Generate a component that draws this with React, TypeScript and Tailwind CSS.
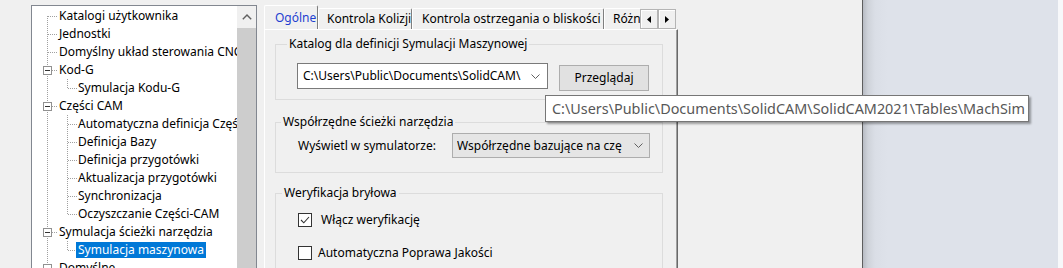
import React from 'react';

type Row = { t: string; l: 0 | 1; box?: boolean; sel?: boolean };

const rows: Row[] = [
  { t: 'Katalogi użytkownika', l: 0 },
  { t: 'Jednostki', l: 0 },
  { t: 'Domyślny układ sterowania CNC', l: 0 },
  { t: 'Kod-G', l: 0, box: true },
  { t: 'Symulacja Kodu-G', l: 1 },
  { t: 'Części CAM', l: 0, box: true },
  { t: 'Automatyczna definicja Części', l: 1 },
  { t: 'Definicja Bazy', l: 1 },
  { t: 'Definicja przygotówki', l: 1 },
  { t: 'Aktualizacja przygotówki', l: 1 },
  { t: 'Synchronizacja', l: 1 },
  { t: 'Oczyszczanie Części-CAM', l: 1 },
  { t: 'Symulacja ścieżki narzędzia', l: 0, box: true },
  { t: 'Symulacja maszynowa', l: 1, sel: true },
  { t: 'Domyślne', l: 0, box: true },
];

const c = (i: number) => 10 + 18 * i;

function TreeLines() {
  const dot = { stroke: '#a0a0a0', strokeDasharray: '1 1', shapeRendering: 'crispEdges' as const };
  const l1Groups: [number, number][] = [
    [3, 4],
    [5, 11],
    [12, 13],
  ];
  return (
    <svg width="205" height="300" className="absolute left-0 top-0 pointer-events-none">
      <line x1="15.5" y1={c(0)} x2="15.5" y2="300" {...dot} />
      {l1Groups.map(([p, e]) => (
        <line key={p} x1="35.5" y1={c(p) + 9} x2="35.5" y2={c(e) + 1} {...dot} />
      ))}
      {rows.map((r, i) =>
        r.l === 0 ? (
          <line key={i} x1={r.box ? 20 : 16} y1={c(i) + 0.5} x2="26" y2={c(i) + 0.5} {...dot} />
        ) : (
          <line key={i} x1="36" y1={c(i) + 0.5} x2="45" y2={c(i) + 0.5} {...dot} />
        )
      )}
      {rows.map((r, i) =>
        r.box ? (
          <g key={'b' + i} shapeRendering="crispEdges">
            <rect x="11.5" y={c(i) - 3.5} width="8" height="8" fill="#fff" stroke="#919191" />
            <line x1="13" y1={c(i) + 0.5} x2="18" y2={c(i) + 0.5} stroke="#333" />
          </g>
        ) : null
      )}
    </svg>
  );
}

function Tree() {
  return (
    <div className="w-[226px] h-[300px] border border-[#828790] bg-white flex shrink-0">
      <div className="relative flex-1 overflow-hidden pt-[1px]">
        <TreeLines />
        {rows.map((r, i) => (
          <div
            key={i}
            className={`relative h-[18px] flex items-center whitespace-nowrap text-[12px] text-black ${
              r.l === 0 ? 'pl-[27px]' : 'pl-[44px]'
            }`}
          >
            <span
              className={`h-[16px] leading-[16px] px-[2px] ${r.sel ? 'bg-[#0078d7] text-white' : ''} ${
                r.l === 0 ? '-ml-[2px]' : ''
              }`}
            >
              {r.t}
            </span>
          </div>
        ))}
      </div>
      <div className="w-[19px] flex flex-col">
        <div className="h-[22px] bg-[#f0f0f0] flex items-center justify-center">
          <svg width="10" height="6">
            <path d="M0.8 5.2 L5 1 L9.2 5.2" stroke="#606060" strokeWidth="1.4" fill="none" />
          </svg>
        </div>
        <div className="flex-1 bg-[#cdcdcd]" />
      </div>
    </div>
  );
}

function Chevron() {
  return (
    <svg width="9" height="5" className="shrink-0">
      <path d="M0.5 0.5 L4.5 4.5 L8.5 0.5" stroke="#606060" fill="none" />
    </svg>
  );
}

function Tab({ label, w, sel, pl }: { label: string; w: number; sel?: boolean; pl: string }) {
  return (
    <div
      style={{ width: w }}
      className={`shrink-0 flex items-center whitespace-nowrap text-[12px] border-l border-t border-r border-l-white border-t-white border-r-[#7f7f7f] rounded-t-[2px] bg-[#f0f0f0] ${pl} ${
        sel ? 'relative z-10 h-[25px] -mb-[1px] text-[#1f3fd0] pb-[1px]' : 'h-[21px] text-black'
      }`}
    >
      {label}
    </div>
  );
}

function ArrowBtn({ dir }: { dir: 'l' | 'r' }) {
  return (
    <div className="w-[18px] h-[20px] bg-[#f0f0f0] border border-[#b4b4b4] flex items-center justify-center shadow-[inset_1px_1px_0_#fff]">
      <svg width="4" height="7">
        {dir === 'l' ? <polygon points="4,0 4,7 0,3.5" fill="#000" /> : <polygon points="0,0 0,7 4,3.5" fill="#000" />}
      </svg>
    </div>
  );
}

function CheckBox({ checked }: { checked?: boolean }) {
  return (
    <div className="w-[14px] h-[14px] border border-[#333] bg-white shrink-0 flex items-center justify-center">
      {checked ? (
        <svg width="12" height="12">
          <path d="M2 6 L4.8 8.8 L10 3" stroke="#333" strokeWidth="1.1" fill="none" />
        </svg>
      ) : null}
    </div>
  );
}

function TabControl() {
  return (
    <div className="ml-[7px] w-[414px] flex flex-col shrink-0 text-[12px]">
      <div className="h-[24px] flex items-end">
        <div className="w-[376px] h-full flex items-end overflow-hidden">
          <Tab label="Ogólne" w={54} sel pl="pl-[10px]" />
          <Tab label="Kontrola Kolizji" w={94} pl="pl-[8px]" />
          <Tab label="Kontrola ostrzegania o bliskości" w={192} pl="pl-[9px]" />
          <Tab label="Różnice" w={60} pl="pl-[8px]" />
        </div>
        <div className="self-start mt-[4px] flex">
          <ArrowBtn dir="l" />
          <ArrowBtn dir="r" />
        </div>
      </div>
      <div className="h-[250px] border-t border-l border-r border-t-white border-l-white border-r-[#696969] shadow-[inset_-1px_0_0_#a0a0a0] bg-[#f0f0f0] flex flex-col">
        <fieldset className="ml-[10px] w-[388px] mt-[6px] border border-[#dcdcdc] min-w-0 pb-[8px]">
          <legend className="ml-[11px] px-[2px] leading-[16px]">Katalog dla definicji Symulacji Maszynowej</legend>
          <div className="flex items-start pl-[21px] pt-[11px]">
            <div className="w-[251px] h-[26px] border border-[#7a7a7a] bg-white flex items-center pl-[5px] pr-[7px]">
              <span className="flex-1 overflow-hidden whitespace-nowrap">C:\Users\Public\Documents\SolidCAM\</span>
              <Chevron />
            </div>
            <div className="ml-[11px] mt-[2px] w-[90px] h-[26px] bg-[#e1e1e1] border border-[#adadad] flex items-center justify-center">
              Przeglądaj
            </div>
          </div>
        </fieldset>
        <fieldset className="ml-[10px] w-[388px] mt-[14px] border border-[#dcdcdc] min-w-0 pb-[14px]">
          <legend className="ml-[5px] px-[2px] leading-[16px]">Współrzędne ścieżki narzędzia</legend>
          <div className="flex items-center pl-[22px] pt-[3px]">
            <div className="w-[154px] whitespace-nowrap">Wyświetl w symulatorze:</div>
            <div className="w-[198px] h-[25px] bg-[#e5e5e5] border border-[#adadad] flex items-center pl-[4px] pr-[6px]">
              <span className="flex-1 overflow-hidden whitespace-nowrap">Współrzędne bazujące na czę</span>
              <Chevron />
            </div>
          </div>
        </fieldset>
        <fieldset className="ml-[10px] w-[388px] mt-[12px] border border-[#dcdcdc] min-w-0 h-[120px]">
          <legend className="ml-[6px] px-[2px] leading-[16px]">Weryfikacja bryłowa</legend>
          <div className="flex flex-col pl-[22px] pt-[10px]">
            <div className="h-[18px] flex items-center">
              <CheckBox checked />
              <span className="ml-[9px]">Włącz weryfikację</span>
            </div>
            <div className="h-[18px] flex items-center mt-[15px]">
              <CheckBox />
              <span className="ml-[6px]">Automatyczna Poprawa Jakości</span>
            </div>
          </div>
        </fieldset>
      </div>
    </div>
  );
}

export default function App() {
  return (
    <div
      className="relative w-[1063px] h-[268px] overflow-hidden flex text-black"
      style={{ fontFamily: '"Noto Sans", "Segoe UI", sans-serif' }}
    >
      <div className="w-[863px] shrink-0 bg-[#f0f0f0] border-r border-[#5e5e5e] flex items-start pt-[5px] pl-[31px]">
        <Tree />
        <TabControl />
      </div>
      <div className="flex-1 flex">
        <div className="flex-1 bg-[linear-gradient(to_right,#b8bcc4_0px,#cfd3da_5px,#dadee6_12px,#dee2ea_24px)]" />
        <div className="w-[5px] bg-[#f7f8fa]" />
      </div>
      <div className="absolute left-[545px] top-[95px] w-[484px] h-[27px] bg-white border border-[#767676] shadow-[2px_2px_2px_rgba(0,0,0,0.35)] flex items-center pl-[6px] text-[14.4px] text-[#575757] whitespace-nowrap">
        C:\Users\Public\Documents\SolidCAM\SolidCAM2021\Tables\MachSim
      </div>
    </div>
  );
}
